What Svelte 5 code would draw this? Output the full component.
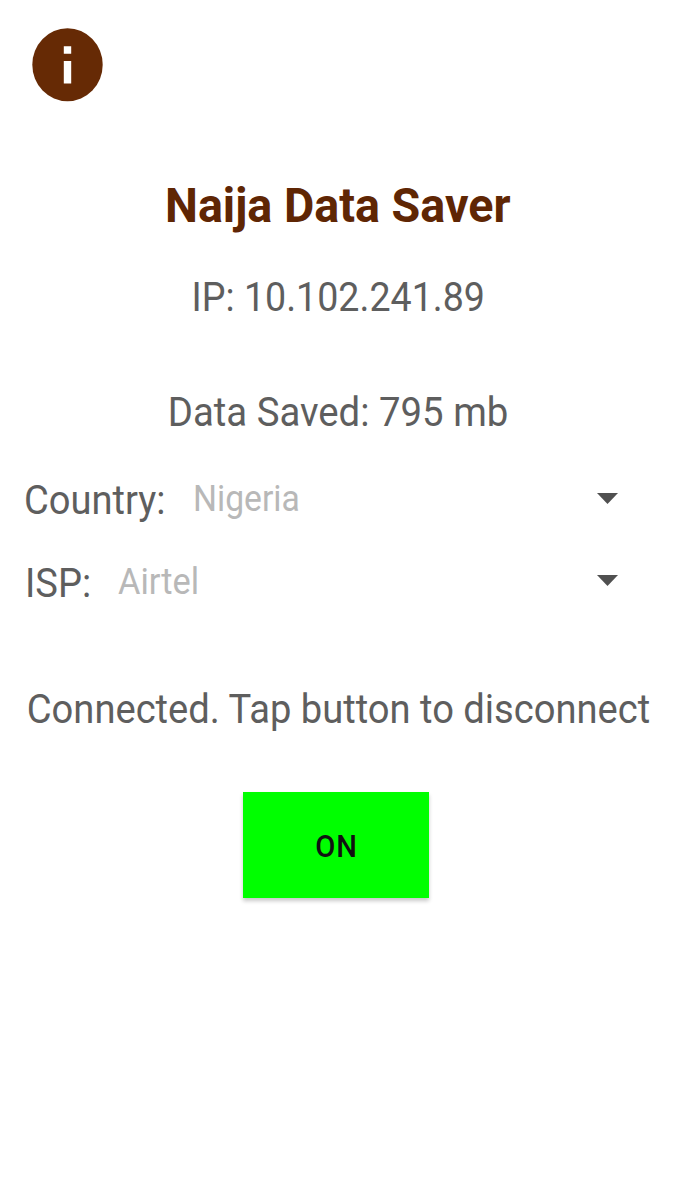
<script>
  const ip = '10.102.241.89';
  const saved = 795;
  const fields = [
    { name: 'Country', value: 'Nigeria', indent: 0, gap: 19.5, squeeze: 0.935 },
    { name: 'ISP', value: 'Airtel', indent: 1, gap: 23.3, squeeze: 0.955 }
  ];
</script>

<main>
  <header>
    <svg class="info" viewBox="0 0 71 74" role="img" aria-label="Information">
      <ellipse cx="35.5" cy="36.8" rx="35.2" ry="36.5" fill="#662a05" />
      <path fill="#fff" d="M31.8 18.2h7.4v7.6h-7.4zM31.8 33h7.4v22.4h-7.4z" />
    </svg>
  </header>
  <h1>Naija Data Saver</h1>
  <p class="ip">IP: {ip}</p>
  <p class="saved">Data Saved: {saved} mb</p>
  <section>
    {#each fields as f}
      <div class="row" style="padding-left: {f.indent}px">
        <span class="label">{f.name}:</span>
        <span class="value" style="margin-left: {f.gap}px; transform: scaleX({f.squeeze})">{f.value}</span>
        <svg class="arrow" viewBox="0 0 21 11"><path d="M0 0h21L10.5 11z" fill="#505050" /></svg>
      </div>
    {/each}
  </section>
  <p class="status">Connected. Tap button to disconnect</p>
  <button><span>ON</span></button>
</main>

<style>
  :global(body) { background: #fff; }
  main {
    box-sizing: border-box; width: 675px; height: 1200px; padding-top: 28px;
    display: flex; flex-direction: column; align-items: center;
    font-family: Roboto, sans-serif; color: #5e5e5e; overflow: hidden;
  }
  header { align-self: stretch; padding-left: 32px; height: 74px; }
  .info { display: block; width: 71px; height: 74px; }
  h1, p { margin: 0; white-space: nowrap; font-size: 40.3px; line-height: 50px; font-weight: 400; }
  h1 { margin-top: 79px; font-size: 48px; font-weight: 700; color: #5f2604; transform: scaleX(.972); }
  .ip { margin: 42px 0 0 2px; transform: scaleX(.933); }
  .saved { margin: 65px 0 0 1px; transform: scaleX(.951); }
  section { align-self: stretch; margin-top: 21px; padding: 0 57px 0 24px; }
  .row { display: flex; align-items: center; height: 82.5px; }
  .row + .row .label { padding-top: 1px; }
  .label { font-size: 40.3px; transform: scaleX(.945); transform-origin: left; }
  .value { font-size: 36px; color: #b8b8b8; flex: 1; transform-origin: left; padding-bottom: 2px; }
  .arrow { width: 21px; height: 11px; margin-bottom: 4px; }
  .status { margin: 61px 0 0 2px; transform: scaleX(.946); }
  button {
    margin: 57px 0 0 -3px; width: 186px; height: 106px; padding: 0; border: 0;
    background: #0f0; color: #111; font: 500 31px Roboto, sans-serif;
    box-shadow: 0 3px 4px rgba(0,0,0,.22);
  }
  button span { display: inline-block; letter-spacing: .8px; margin-right: -.8px; transform: scaleX(.94); padding-top: 2px; }
</style>
